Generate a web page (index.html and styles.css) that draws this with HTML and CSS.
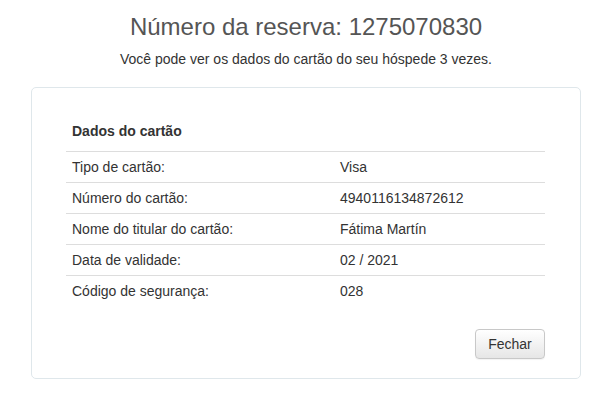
FILE: index.html
```html
<!DOCTYPE html>
<html lang="pt">
<head>
<meta charset="utf-8">
<link rel="stylesheet" href="styles.css">
</head>
<body>
<div class="page">
  <h1 class="title">Número da reserva: 1275070830</h1>
  <p class="subtitle">Você pode ver os dados do cartão do seu hóspede 3 vezes.</p>
  <div class="card">
    <h2 class="card-heading">Dados do cartão</h2>
    <table class="details">
      <tr><td class="label">Tipo de cartão:</td><td>Visa</td></tr>
      <tr><td class="label">Número do cartão:</td><td>4940116134872612</td></tr>
      <tr><td class="label">Nome do titular do cartão:</td><td>Fátima Martín</td></tr>
      <tr><td class="label">Data de validade:</td><td>02 / 2021</td></tr>
      <tr><td class="label">Código de segurança:</td><td>028</td></tr>
    </table>
    <div class="actions">
      <button class="btn">Fechar</button>
    </div>
  </div>
</div>
</body>
</html>
```
FILE: styles.css
```css
html, body {
  margin: 0;
  padding: 0;
  background: #fff;
}
body {
  font-family: "Liberation Sans", Arial, sans-serif;
  font-size: 14px;
  color: #333;
}
.page {
  width: 550px;
  margin-left: 31px;
  padding-top: 12px;
}
.title {
  margin: 0;
  font-size: 24px;
  font-weight: normal;
  line-height: 30px;
  color: #555;
  text-align: center;
}
.subtitle {
  margin: 7px 0 0;
  line-height: 20px;
  text-align: center;
  color: #333;
}
.card {
  margin-top: 18px;
  border: 1px solid #dfe7eb;
  border-radius: 5px;
  padding: 33px 35px 19px 34px;
}
.card-heading {
  margin: 0 0 10px;
  font-size: 14px;
  font-weight: bold;
  line-height: 20px;
  color: #333;
  padding-left: 6px;
}
.details {
  width: 100%;
  border-collapse: collapse;
}
.details td {
  border-top: 1px solid #ddd;
  padding: 5px 6px;
  line-height: 20px;
  vertical-align: middle;
}
.details td.label {
  width: 256px;
}
.actions {
  display: flex;
  justify-content: flex-end;
  margin-top: 23px;
}
.btn {
  font-family: "Liberation Sans", Arial, sans-serif;
  font-size: 14px;
  color: #333;
  height: 30px;
  width: 70px;
  padding: 0 12px;
  border: 1px solid #c8c8c8;
  border-radius: 4px;
  background: linear-gradient(#ffffff, #e6e6e6);
  box-shadow: 0 1px 1px rgba(0,0,0,0.05);
}
```
